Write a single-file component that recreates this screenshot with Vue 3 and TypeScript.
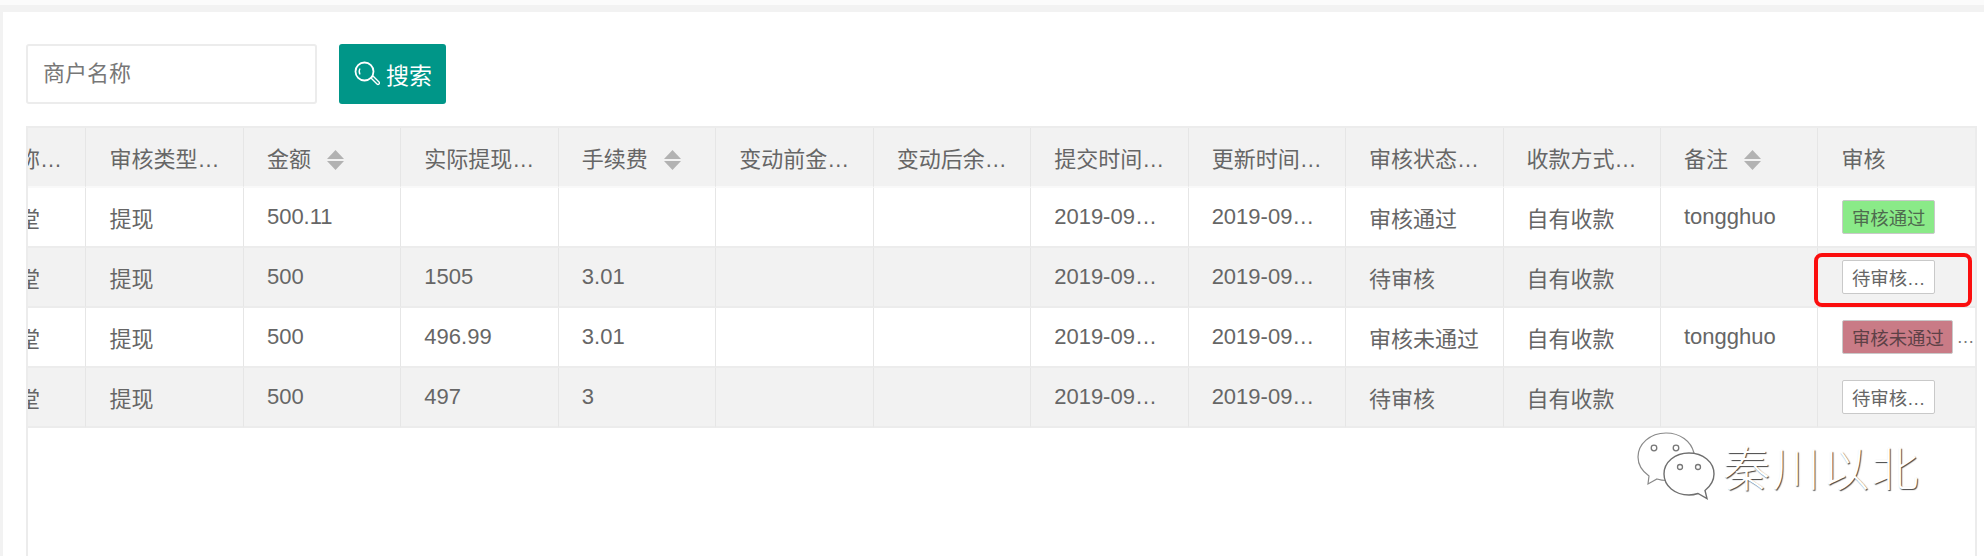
<template>
  <div class="page">
    <div class="top-strip"></div>
    <div class="card">
      <!-- 搜索栏 -->
      <div class="search-bar">
        <input class="search-input" type="text" placeholder="商户名称" />
        <button class="search-btn" type="button">
          <svg class="search-icon" viewBox="0 0 26 26" fill="none" stroke="#fff">
            <circle cx="10.5" cy="10.5" r="9" stroke-width="1.8" />
            <path d="M6 13.5a6 6 0 0 1 0-6" stroke-width="1.3" />
            <path d="M17 17l2-2 6 6a1.4 1.4 0 0 1-2 2z" stroke-width="1.4" />
          </svg>
          <span>搜索</span>
        </button>
      </div>

      <!-- 数据表格 -->
      <div class="table-box">
        <table class="data-table">
          <thead>
            <tr>
              <th v-for="col in columns" :key="col.title">
                {{ col.title }}
                <svg v-if="col.sortable" class="sort-icon" viewBox="0 0 17 20" fill="#b2b2b2">
                  <path d="M8.5 0L17 9H0z" />
                  <path d="M0 11h17l-8.5 9z" />
                </svg>
              </th>
            </tr>
          </thead>
          <tbody>
            <tr v-for="(row, i) in rows" :key="i">
              <td v-for="(cell, j) in row.cells" :key="j">{{ cell }}</td>
              <td>
                <div class="audit-cell">
                  <button class="audit-btn" :class="row.audit.kind" type="button">{{ row.audit.label }}</button>
                  <span v-if="row.audit.kind === 'rejected'" class="more">…</span>
                </div>
              </td>
            </tr>
          </tbody>
        </table>
      </div>
    </div>

    <!-- 红框标注 -->
    <div class="highlight"></div>

    <!-- 水印 -->
    <div class="watermark">
      <svg class="wechat" viewBox="0 0 78 68">
        <path
          d="M29 1C13 1 1 12 1 25c0 8 4 14 11 19l-1 8 9-5c3 1 6 1.500 10 1.500 3 0 5 0 7-1C34 35 44 22 57 21 54 9 43 1 29 1z"
          fill="#fff" stroke="#8a8a8a" stroke-width="1.200"
        />
        <path
          d="M52 21c-14 0-25 9-25 21s11 21 25 21c4 0 6-.5 9-1.500l9 5-2-8c5-4 9-10 9-16.500C77 30 66 21 52 21z"
          fill="#fff" stroke="#6f6f6f" stroke-width="1.400"
        />
        <g fill="#fff" stroke="#777" stroke-width="1.300">
          <circle cx="17" cy="16" r="2.800" />
          <circle cx="39" cy="16" r="2.800" />
          <circle cx="43" cy="35" r="2.500" />
          <circle cx="61" cy="35" r="2.500" />
        </g>
      </svg>
      <span class="wm-text">秦川以北</span>
    </div>
  </div>
</template>

<script setup lang="ts">
interface Column {
  title: string
  sortable?: boolean
}

type AuditKind = 'passed' | 'pending' | 'rejected'

interface Row {
  cells: string[]
  audit: { label: string; kind: AuditKind }
}

const columns: Column[] = [
  { title: '商户名称…' },
  { title: '审核类型…' },
  { title: '金额', sortable: true },
  { title: '实际提现…' },
  { title: '手续费', sortable: true },
  { title: '变动前金…' },
  { title: '变动后余…' },
  { title: '提交时间…' },
  { title: '更新时间…' },
  { title: '审核状态…' },
  { title: '收款方式…' },
  { title: '备注', sortable: true },
  { title: '审核' }
]

const shop = '童话书堂'
const time = '2019-09…'

function makeRow(
  amount: string,
  actual: string,
  fee: string,
  status: string,
  remark: string,
  label: string,
  kind: AuditKind
): Row {
  return {
    cells: [shop, '提现', amount, actual, fee, '', '', time, time, status, '自有收款', remark],
    audit: { label, kind }
  }
}

const rows: Row[] = [
  makeRow('500.11', '', '', '审核通过', 'tongghuo', '审核通过', 'passed'),
  makeRow('500', '1505', '3.01', '待审核', '', '待审核…', 'pending'),
  makeRow('500', '496.99', '3.01', '审核未通过', 'tongghuo', '审核未通过', 'rejected'),
  makeRow('500', '497', '3', '待审核', '', '待审核…', 'pending')
]
</script>

<style>
html,
body {
  margin: 0;
  background: #f2f2f2;
}
</style>

<style scoped>
.page {
  position: relative;
  width: 1984px;
  height: 556px;
  overflow: hidden;
  display: flex;
  flex-direction: column;
  background: #f2f2f2;
  font-family: "Liberation Sans", "Noto Sans CJK SC", sans-serif;
  color: #666;
}

.top-strip {
  height: 5px;
  margin-bottom: 7px;
  background: #fbfbfb;
}

.card {
  flex: 1;
  min-height: 0;
  margin-left: 3px;
  padding: 32px 7px 0 23px;
  display: flex;
  flex-direction: column;
  background: #fff;
}

/* ========== 搜索栏 ========== */
.search-bar {
  display: flex;
  gap: 22px;
  height: 60px;
  margin-bottom: 22px;
}

.search-input {
  width: 291px;
  height: 60px;
  padding: 0 15px;
  box-sizing: border-box;
  border: 2px solid #ececec;
  border-radius: 3px;
  outline: none;
  font-family: inherit;
  font-size: 22px;
  color: #666;
}

.search-input::placeholder {
  color: #777;
  opacity: 1;
}

.search-btn {
  width: 107px;
  height: 60px;
  padding: 0 0 0 1px;
  display: flex;
  align-items: center;
  justify-content: center;
  gap: 6px;
  border: none;
  border-radius: 3px;
  background: #009688;
  color: #fff;
  font-family: inherit;
  font-size: 23px;
}

.search-icon {
  width: 26px;
  height: 26px;
}

/* ========== 表格 ========== */
.table-box {
  flex: 1;
  min-height: 0;
  overflow: hidden;
  border: 2px solid #ececec;
  border-bottom: none;
}

.data-table {
  width: 2047px;
  margin-left: -99px;
  table-layout: fixed;
  border-collapse: separate;
  border-spacing: 0;
  font-size: 22px;
}

.data-table th,
.data-table td {
  box-sizing: border-box;
  padding: 0 0 0 23px;
  text-align: left;
  font-weight: 400;
  white-space: nowrap;
  overflow: hidden;
  border-right: 1px solid #e6e6e6;
  border-bottom: 2px solid #ececec;
}

.data-table th {
  height: 60px;
  background: #f2f2f2;
  border-bottom-color: #f9f9f9;
}

.data-table td {
  height: 60px;
}

.data-table tbody tr:nth-child(even) td {
  background: #f2f2f2;
}

.sort-icon {
  width: 17px;
  height: 20px;
  margin-left: 10px;
  vertical-align: -3px;
}

.audit-cell {
  display: flex;
  align-items: center;
  gap: 3px;
  margin-left: 1px;
}

.audit-btn {
  height: 34px;
  padding: 0 8.500px;
  box-sizing: border-box;
  border: 1px solid #c9c9c9;
  border-radius: 2px;
  background: #fff;
  color: #666;
  font-family: inherit;
  font-size: 18.400px;
  white-space: nowrap;
}

.audit-btn.passed {
  background: #8aea88;
  color: #4f6a4f;
}

.audit-btn.rejected {
  background: #c97b86;
  color: #5d4146;
}

.more {
  font-size: 18px;
  color: #777;
}

/* ========== 标注与水印 ========== */
.highlight {
  position: absolute;
  left: 1814px;
  top: 253px;
  width: 158px;
  height: 54px;
  box-sizing: border-box;
  border: 4px solid #fb0e0e;
  border-radius: 8px;
}

.watermark {
  position: absolute;
  left: 1637px;
  top: 431px;
  display: flex;
  align-items: center;
  gap: 8px;
}

.wechat {
  width: 78px;
  height: 68px;
}

.wm-text {
  font-size: 47px;
  font-weight: 300;
  letter-spacing: 2.500px;
  color: #fff;
  text-shadow: 1px 1px 1px #444;
}
</style>
